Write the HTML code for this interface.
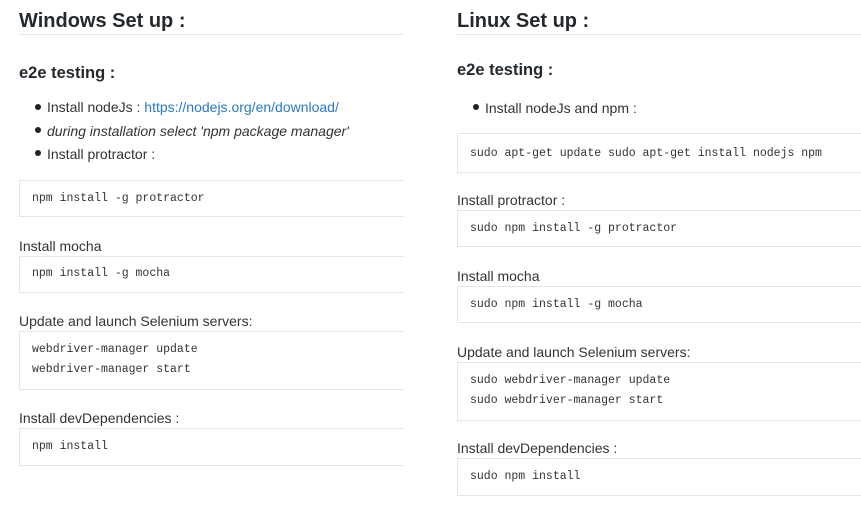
<!DOCTYPE html>
<html><head><meta charset="utf-8"><style>
body{margin:0;width:861px;height:508px;background:#fff;position:relative;overflow:hidden;font-family:"Liberation Sans",sans-serif;color:#333;}
h1{position:absolute;margin:0;font-size:20px;font-weight:bold;color:#24292e;line-height:24px;}
.hr{position:absolute;height:1px;background:#e6e6e6;}
h3{position:absolute;margin:0;font-size:16.5px;font-weight:bold;color:#24292e;line-height:20px;}
.t{position:absolute;font-size:14px;line-height:18px;white-space:nowrap;color:#333;}
.dot{position:absolute;width:6px;height:6px;border-radius:50%;background:#222;}
.box{position:absolute;border:1px solid #e5e5e5;border-right:none;background:#fff;box-sizing:border-box;font-family:"Liberation Mono",monospace;font-size:11.5px;color:#333;}
.box div{position:absolute;left:12px;white-space:nowrap;}
a{color:#2a7ac6;text-decoration:none;}
</style></head><body>
<h1 style="left:19px;top:9px">Windows Set up :</h1>
<div class="hr" style="left:19px;top:34px;width:385px"></div>
<h3 style="left:19px;top:63px">e2e testing :</h3>
<div class="dot" style="left:35px;top:104px"></div>
<div class="t" style="left:47px;top:98px">Install nodeJs : <a>https://nodejs.org/en/download/</a></div>
<div class="dot" style="left:35px;top:127px"></div>
<div class="t" style="left:47px;top:122px;font-style:italic">during installation select 'npm package manager'</div>
<div class="dot" style="left:35px;top:150px"></div>
<div class="t" style="left:47px;top:145px">Install protractor :</div>
<div class="box" style="left:19px;top:180px;width:385px;height:37px"><div style="top:11px">npm install -g protractor</div></div>
<div class="t" style="left:19px;top:237px">Install mocha</div>
<div class="box" style="left:19px;top:256px;width:385px;height:37px"><div style="top:10px">npm install -g mocha</div></div>
<div class="t" style="left:19px;top:312px">Update and launch Selenium servers:</div>
<div class="box" style="left:19px;top:331px;width:385px;height:59px"><div style="top:11px">webdriver-manager update</div><div style="top:31px">webdriver-manager start</div></div>
<div class="t" style="left:19px;top:409px">Install devDependencies :</div>
<div class="box" style="left:19px;top:428px;width:385px;height:38px"><div style="top:11px">npm install</div></div>

<h1 style="left:457px;top:9px">Linux Set up :</h1>
<div class="hr" style="left:457px;top:34px;width:404px"></div>
<h3 style="left:457px;top:60px">e2e testing :</h3>
<div class="dot" style="left:473px;top:104px"></div>
<div class="t" style="left:485px;top:99px">Install nodeJs and npm :</div>
<div class="box" style="left:457px;top:133px;width:404px;height:40px"><div style="top:13px">sudo apt-get update sudo apt-get install nodejs npm</div></div>
<div class="t" style="left:457px;top:191px">Install protractor :</div>
<div class="box" style="left:457px;top:210px;width:404px;height:37px"><div style="top:11px">sudo npm install -g protractor</div></div>
<div class="t" style="left:457px;top:267px">Install mocha</div>
<div class="box" style="left:457px;top:286px;width:404px;height:37px"><div style="top:11px">sudo npm install -g mocha</div></div>
<div class="t" style="left:457px;top:343px">Update and launch Selenium servers:</div>
<div class="box" style="left:457px;top:362px;width:404px;height:59px"><div style="top:11px">sudo webdriver-manager update</div><div style="top:31px">sudo webdriver-manager start</div></div>
<div class="t" style="left:457px;top:439px">Install devDependencies :</div>
<div class="box" style="left:457px;top:458px;width:404px;height:38px"><div style="top:11px">sudo npm install</div></div>
</body></html>
